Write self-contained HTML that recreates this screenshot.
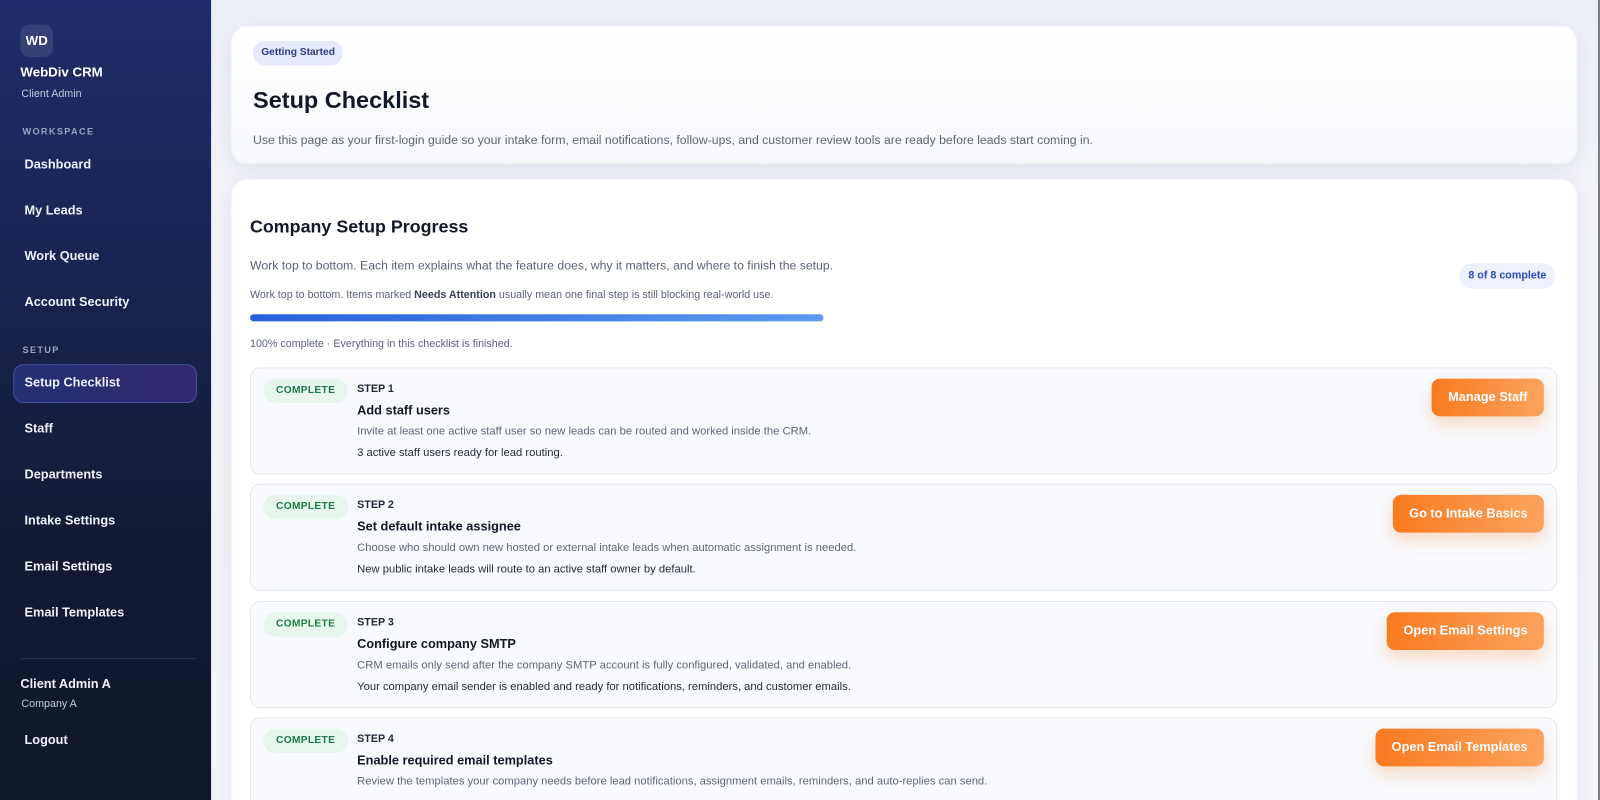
<!DOCTYPE html>
<html><head><meta charset="utf-8"><style>
*{box-sizing:border-box;margin:0;padding:0}
html,body{width:1600px;height:800px;overflow:hidden}
body{font-family:"Liberation Sans",sans-serif;background:#f1f3f9}
.wrap{position:absolute;left:0;top:0;width:1568px;height:784px;transform:scale(1.020408);transform-origin:0 0;overflow:hidden}
.side{position:absolute;left:0;top:0;width:207px;height:784px;background:linear-gradient(180deg,#212c6a 0%,#1a2350 35%,#111a33 70%,#0f172a 100%);color:#fff}
.logo{position:absolute;left:20px;top:24px;width:32px;height:32px;border-radius:9px;background:rgba(255,255,255,.1);font-weight:700;font-size:13px;line-height:32px;text-align:center}
.brand{position:absolute;left:20px;top:63px;font-weight:700;font-size:13px}
.role{position:absolute;left:21px;top:86px;font-size:10.5px;color:#c2c8dc}
.sec{position:absolute;left:22px;font-size:9px;letter-spacing:1.3px;color:#9aa3c0;font-weight:700}
.nav{position:absolute;left:24px;font-size:12.5px;font-weight:700;color:#eef1f8}
.active{position:absolute;left:13px;top:357px;width:180px;height:38px;border-radius:10px;background:linear-gradient(90deg,#243075,#33296e);border:1px solid #4a52a0}
.divider{position:absolute;left:20px;right:14px;top:645px;border-top:1px solid #2b3450}
.main{position:absolute;left:207px;top:0;width:1361px;height:784px;background:linear-gradient(180deg,#eceef7,#f3f4f8 30%,#f4f5f9)}
.card{position:absolute;left:226px;width:1320px;background:#fff;border-radius:16px;box-shadow:0 6px 18px rgba(30,40,90,.08);border:1px solid #eef0f5}
.pill{position:absolute;left:248px;top:40px;height:24px;padding:0 8px;border-radius:12px;background:#e4e9fb;color:#2d3e87;font-size:10px;font-weight:700;line-height:24px}
h1{position:absolute;left:248px;top:85px;font-size:23px;color:#111827}
.sub{position:absolute;left:248px;top:130px;font-size:12px;color:#5b6478}
.t{position:absolute}
.step{position:absolute;left:245px;width:1281px;height:105px;border:1px solid #e2e6ee;border-radius:10px;background:#f8fafd}
.badge{position:absolute;left:12px;top:10px;width:83px;height:24px;border-radius:12px;background:#e7f6ec;color:#1f7a45;font-size:10px;font-weight:700;text-align:center;line-height:24px;letter-spacing:.3px}
.sn{position:absolute;left:104px;top:14px;font-size:10.5px;font-weight:700;color:#1f2937}
.st{position:absolute;left:104px;top:34px;font-size:12.5px;font-weight:700;color:#111827}
.sd{position:absolute;left:104px;top:56px;font-size:11px;color:#5f6777}
.ss{position:absolute;left:104px;top:77px;font-size:11px;color:#1f2937}
.btn{position:absolute;right:12px;top:10px;height:37px;padding:0 16px;border-radius:8px;background:linear-gradient(90deg,#f97a1f,#fba35e);color:#fff;font-size:12.5px;font-weight:700;line-height:37px;box-shadow:0 8px 16px rgba(249,122,31,.25)}
</style></head><body><div class="wrap">
<div class="side">
<div class="logo">WD</div>
<div class="brand">WebDiv CRM</div>
<div class="role">Client Admin</div>
<div class="sec" style="top:124px">WORKSPACE</div>
<div class="nav" style="top:154px">Dashboard</div>
<div class="nav" style="top:199px">My Leads</div>
<div class="nav" style="top:244px">Work Queue</div>
<div class="nav" style="top:289px">Account Security</div>
<div class="sec" style="top:338px">SETUP</div>
<div class="active"></div>
<div class="nav" style="top:368px">Setup Checklist</div>
<div class="nav" style="top:413px">Staff</div>
<div class="nav" style="top:458px">Departments</div>
<div class="nav" style="top:503px">Intake Settings</div>
<div class="nav" style="top:548px">Email Settings</div>
<div class="nav" style="top:593px">Email Templates</div>
<div class="divider"></div>
<div class="nav" style="top:663px;left:20px">Client Admin A</div>
<div class="role" style="top:684px">Company A</div>
<div class="nav" style="top:718px">Logout</div>
</div>
<div class="main"></div>
<div style="position:absolute;left:1566px;top:0;width:2px;height:784px;background:#7a7d86"></div>
<div class="card" style="top:25px;height:136px;background:linear-gradient(180deg,#fff,#f8f9fd)"></div>
<div class="pill">Getting Started</div>
<h1>Setup Checklist</h1>
<div class="sub">Use this page as your first-login guide so your intake form, email notifications, follow-ups, and customer review tools are ready before leads start coming in.</div>
<div class="card" style="top:175px;height:640px"></div>
<div class="t" style="left:245px;top:212px;font-size:17.5px;font-weight:700;color:#111827">Company Setup Progress</div>
<div class="t" style="left:245px;top:253px;font-size:12px;color:#5b6478">Work top to bottom. Each item explains what the feature does, why it matters, and where to finish the setup.</div>
<div class="t" style="left:1430px;top:258px;height:25px;padding:0 9px;border-radius:13px;background:#edf2fd;color:#2d4bb8;font-size:10.5px;font-weight:700;line-height:25px">8 of 8 complete</div>
<div class="t" style="left:245px;top:283px;font-size:10.5px;color:#5b6478">Work top to bottom. Items marked <b style="color:#374151">Needs Attention</b> usually mean one final step is still blocking real-world use.</div>
<div class="t" style="left:245px;top:308px;width:562px;height:7px;border-radius:4px;background:linear-gradient(90deg,#2a5fdc,#5b9bf0)"></div>
<div class="t" style="left:245px;top:331px;font-size:10.5px;color:#5b6478">100% complete · Everything in this checklist is finished.</div>

<div class="step" style="top:360px"><div class="badge">COMPLETE</div><div class="sn">STEP 1</div><div class="st">Add staff users</div><div class="sd">Invite at least one active staff user so new leads can be routed and worked inside the CRM.</div><div class="ss">3 active staff users ready for lead routing.</div><div class="btn">Manage Staff</div></div>
<div class="step" style="top:474px"><div class="badge">COMPLETE</div><div class="sn">STEP 2</div><div class="st">Set default intake assignee</div><div class="sd">Choose who should own new hosted or external intake leads when automatic assignment is needed.</div><div class="ss">New public intake leads will route to an active staff owner by default.</div><div class="btn">Go to Intake Basics</div></div>
<div class="step" style="top:589px"><div class="badge">COMPLETE</div><div class="sn">STEP 3</div><div class="st">Configure company SMTP</div><div class="sd">CRM emails only send after the company SMTP account is fully configured, validated, and enabled.</div><div class="ss">Your company email sender is enabled and ready for notifications, reminders, and customer emails.</div><div class="btn">Open Email Settings</div></div>
<div class="step" style="top:703px"><div class="badge">COMPLETE</div><div class="sn">STEP 4</div><div class="st">Enable required email templates</div><div class="sd">Review the templates your company needs before lead notifications, assignment emails, reminders, and auto-replies can send.</div><div class="btn">Open Email Templates</div></div>
</div></body></html>
